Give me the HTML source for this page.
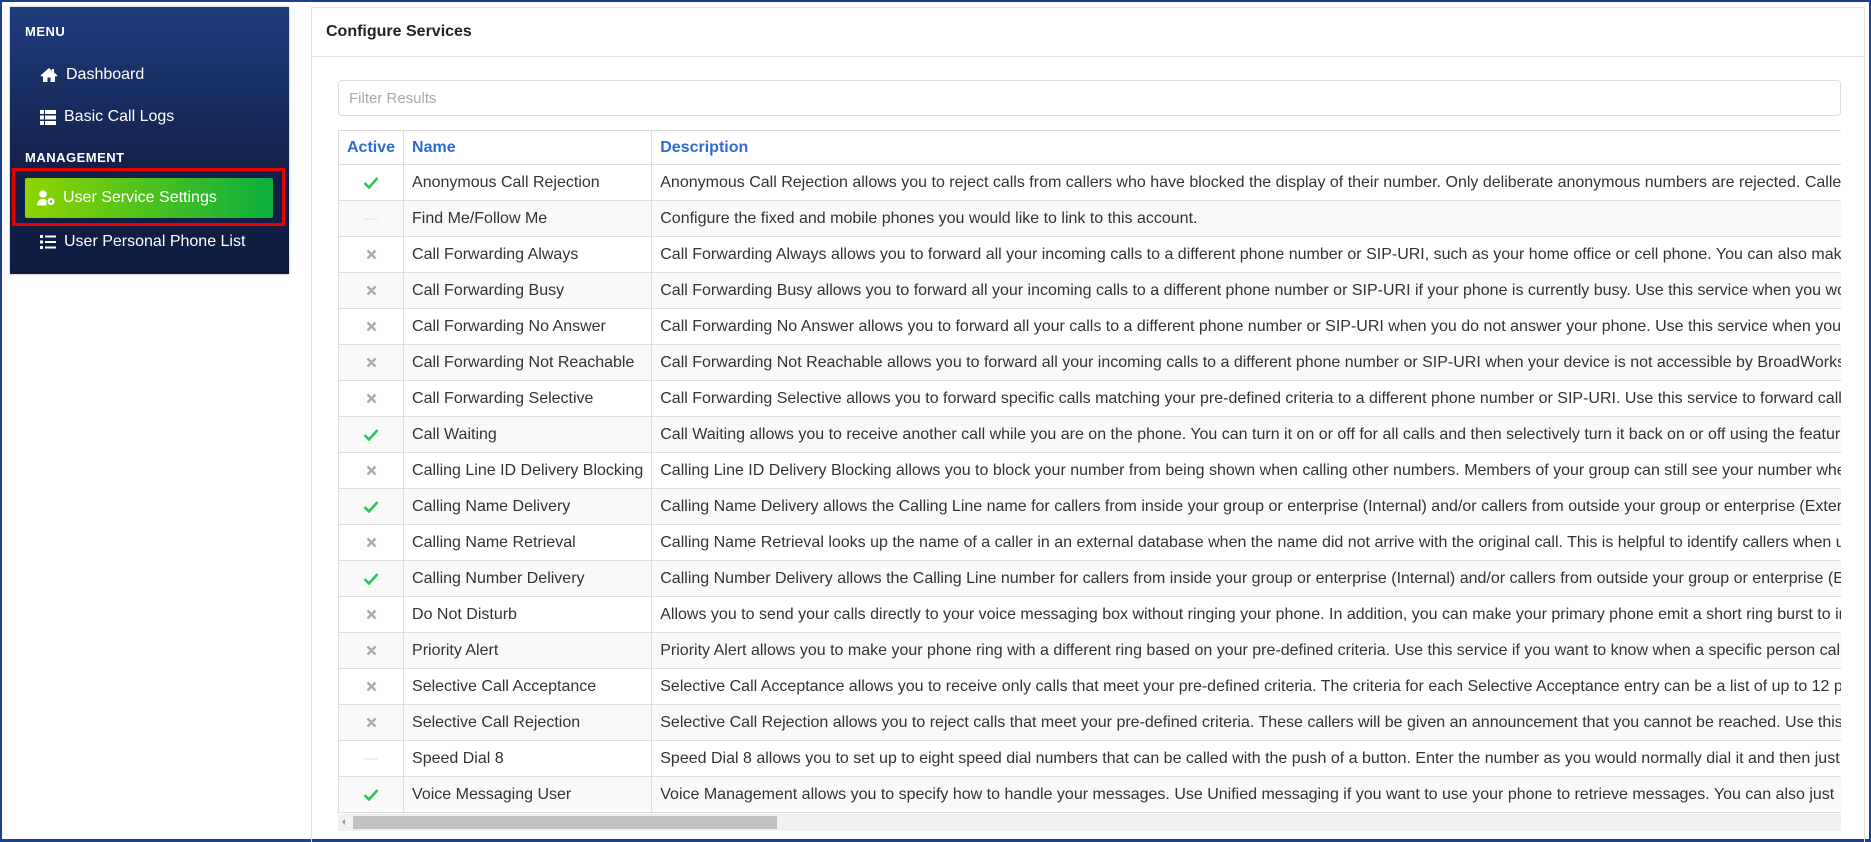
<!DOCTYPE html>
<html><head><meta charset="utf-8"><style>
*{box-sizing:border-box;margin:0;padding:0}
html,body{width:1871px;height:842px;overflow:hidden;background:#fff;font-family:"Liberation Sans",Arial,sans-serif}
.frame{position:absolute;left:0;top:0;width:1871px;height:842px;border:2px solid #1c3f94;border-bottom-width:3px}
.side{position:absolute;left:10px;top:7px;width:279px;height:267px;background:linear-gradient(#1e3d7e,#13214a 60%,#0f1c40);box-shadow:0 0 2px #999}
.lbl{position:absolute;left:15px;color:#fff;font-size:13px;font-weight:bold;letter-spacing:.5px}
.item{position:absolute;left:30px;color:#fff;font-size:16px;display:flex;align-items:center;gap:8px}
.red{position:absolute;left:2px;top:161px;width:273px;height:58px;border:3px solid #e60000}
.btn{position:absolute;left:15px;top:171px;width:248px;height:40px;background:linear-gradient(90deg,#8fd400,#0bae3f);border-radius:2px;color:#fff;font-size:16px;display:flex;align-items:center;padding-left:12px;gap:7px}
.main{position:absolute;left:311px;top:7px;width:1554px;height:835px;border:1px solid #e2e2e2;border-bottom:none}
.hdr{height:49px;border-bottom:1px solid #e5e5e5;font-weight:bold;font-size:16px;color:#222;padding:15px 0 0 14px}
.filter{position:absolute;left:26px;top:72px;width:1503px;height:36px;border:1px solid #ddd;border-radius:4px;color:#aaa;font-size:15px;padding:9px 0 0 10px}
.tw{position:absolute;left:26px;top:122px;width:1503px;height:684px;overflow:hidden}
table{border-collapse:collapse;white-space:nowrap;font-size:16px;color:#333}
td,th{border:1px solid #ddd;height:36px;padding:0 8px;text-align:left}
th{color:#2b6bd6;height:34px;font-weight:bold}
tr:nth-child(odd) td{background:#f9f9f9}
td.a{text-align:center;width:64px;line-height:0}
.na{display:inline-block;width:14px;height:2px;background:#eee;vertical-align:middle}
.sb{position:absolute;left:26px;top:806px;width:1503px;height:17px;background:#f1f1f1}
.th{position:absolute;left:15px;top:2px;width:424px;height:13px;background:#c1c1c1}
.la{position:absolute;left:4px;top:5px;width:0;height:0;border:3px solid transparent;border-right-color:#999;border-left:0}
</style></head><body>
<div class="frame"></div>
<div class="side">
<div class="lbl" style="top:17px">MENU</div>
<div class="item" style="top:59px"><svg width="18" height="16" viewBox="0 0 18 16"><path d="M9 1L0.5 8.5 2 9.8 3 9V15h4.5v-4.5h3V15H15V9l1 .8 1.5-1.3L14 5.4V2h-2v1.7z" fill="#fff"/></svg>Dashboard</div>
<div class="item" style="top:101px"><svg width="16" height="15" viewBox="0 0 16 15"><g fill="#fff"><rect x="0" y="0" width="4" height="4"/><rect x="5" y="0" width="11" height="4"/><rect x="0" y="5.5" width="4" height="4"/><rect x="5" y="5.5" width="11" height="4"/><rect x="0" y="11" width="4" height="4"/><rect x="5" y="11" width="11" height="4"/></g></svg>Basic Call Logs</div>
<div class="lbl" style="top:143px">MANAGEMENT</div>
<div class="red"></div>
<div class="btn"><svg width="19" height="16" viewBox="0 0 19 16"><g fill="#fff"><circle cx="6" cy="4" r="3.8"/><path d="M0 15.5c0-4.5 2.5-6.5 6-6.5 1.5 0 2.5.4 3.3 1L9.5 15.5z"/><circle cx="14" cy="11.5" r="3.6"/></g><circle cx="14" cy="11.5" r="1.3" fill="#5cc418"/></svg>User Service Settings</div>
<div class="item" style="top:226px"><svg width="16" height="14" viewBox="0 0 16 14"><g fill="#fff"><rect x="0" y="0" width="3" height="3"/><rect x="5" y="0.5" width="11" height="2"/><rect x="0" y="5.5" width="3" height="3"/><rect x="5" y="6" width="11" height="2"/><rect x="0" y="11" width="3" height="3"/><rect x="5" y="11.5" width="11" height="2"/></g></svg>User Personal Phone List</div>
</div>
<div class="main">
<div class="hdr">Configure Services</div>
<div class="filter">Filter Results</div>
<div class="tw"><table>
<tr><th style="width:64px">Active</th><th style="width:248px">Name</th><th>Description</th></tr>
<tr><td class="a"><svg width="16" height="13" viewBox="0 0 16 13"><path d="M1.5 7l4.5 4.5L14.5 2" stroke="#2cc55a" stroke-width="2.6" fill="none"/></svg></td><td>Anonymous Call Rejection</td><td>Anonymous Call Rejection allows you to reject calls from callers who have blocked the display of their number. Only deliberate anonymous numbers are rejected. Callers who are unavailable are not rejected.</td></tr>
<tr><td class="a"><span class="na"></span></td><td>Find Me/Follow Me</td><td>Configure the fixed and mobile phones you would like to link to this account.</td></tr>
<tr><td class="a"><svg width="11" height="11" viewBox="0 0 11 11"><path d="M1.5 1.5l8 8M9.5 1.5l-8 8" stroke="#aaa" stroke-width="2.4"/></svg></td><td>Call Forwarding Always</td><td>Call Forwarding Always allows you to forward all your incoming calls to a different phone number or SIP-URI, such as your home office or cell phone. You can also make</td></tr>
<tr><td class="a"><svg width="11" height="11" viewBox="0 0 11 11"><path d="M1.5 1.5l8 8M9.5 1.5l-8 8" stroke="#aaa" stroke-width="2.4"/></svg></td><td>Call Forwarding Busy</td><td>Call Forwarding Busy allows you to forward all your incoming calls to a different phone number or SIP-URI if your phone is currently busy. Use this service when you would</td></tr>
<tr><td class="a"><svg width="11" height="11" viewBox="0 0 11 11"><path d="M1.5 1.5l8 8M9.5 1.5l-8 8" stroke="#aaa" stroke-width="2.4"/></svg></td><td>Call Forwarding No Answer</td><td>Call Forwarding No Answer allows you to forward all your calls to a different phone number or SIP-URI when you do not answer your phone. Use this service when you</td></tr>
<tr><td class="a"><svg width="11" height="11" viewBox="0 0 11 11"><path d="M1.5 1.5l8 8M9.5 1.5l-8 8" stroke="#aaa" stroke-width="2.4"/></svg></td><td>Call Forwarding Not Reachable</td><td>Call Forwarding Not Reachable allows you to forward all your incoming calls to a different phone number or SIP-URI when your device is not accessible by BroadWorks</td></tr>
<tr><td class="a"><svg width="11" height="11" viewBox="0 0 11 11"><path d="M1.5 1.5l8 8M9.5 1.5l-8 8" stroke="#aaa" stroke-width="2.4"/></svg></td><td>Call Forwarding Selective</td><td>Call Forwarding Selective allows you to forward specific calls matching your pre-defined criteria to a different phone number or SIP-URI. Use this service to forward calls</td></tr>
<tr><td class="a"><svg width="16" height="13" viewBox="0 0 16 13"><path d="M1.5 7l4.5 4.5L14.5 2" stroke="#2cc55a" stroke-width="2.6" fill="none"/></svg></td><td>Call Waiting</td><td>Call Waiting allows you to receive another call while you are on the phone. You can turn it on or off for all calls and then selectively turn it back on or off using the feature</td></tr>
<tr><td class="a"><svg width="11" height="11" viewBox="0 0 11 11"><path d="M1.5 1.5l8 8M9.5 1.5l-8 8" stroke="#aaa" stroke-width="2.4"/></svg></td><td>Calling Line ID Delivery Blocking</td><td>Calling Line ID Delivery Blocking allows you to block your number from being shown when calling other numbers. Members of your group can still see your number when</td></tr>
<tr><td class="a"><svg width="16" height="13" viewBox="0 0 16 13"><path d="M1.5 7l4.5 4.5L14.5 2" stroke="#2cc55a" stroke-width="2.6" fill="none"/></svg></td><td>Calling Name Delivery</td><td>Calling Name Delivery allows the Calling Line name for callers from inside your group or enterprise (Internal) and/or callers from outside your group or enterprise (External)</td></tr>
<tr><td class="a"><svg width="11" height="11" viewBox="0 0 11 11"><path d="M1.5 1.5l8 8M9.5 1.5l-8 8" stroke="#aaa" stroke-width="2.4"/></svg></td><td>Calling Name Retrieval</td><td>Calling Name Retrieval looks up the name of a caller in an external database when the name did not arrive with the original call. This is helpful to identify callers when u</td></tr>
<tr><td class="a"><svg width="16" height="13" viewBox="0 0 16 13"><path d="M1.5 7l4.5 4.5L14.5 2" stroke="#2cc55a" stroke-width="2.6" fill="none"/></svg></td><td>Calling Number Delivery</td><td>Calling Number Delivery allows the Calling Line number for callers from inside your group or enterprise (Internal) and/or callers from outside your group or enterprise (External)</td></tr>
<tr><td class="a"><svg width="11" height="11" viewBox="0 0 11 11"><path d="M1.5 1.5l8 8M9.5 1.5l-8 8" stroke="#aaa" stroke-width="2.4"/></svg></td><td>Do Not Disturb</td><td>Allows you to send your calls directly to your voice messaging box without ringing your phone. In addition, you can make your primary phone emit a short ring burst to inform</td></tr>
<tr><td class="a"><svg width="11" height="11" viewBox="0 0 11 11"><path d="M1.5 1.5l8 8M9.5 1.5l-8 8" stroke="#aaa" stroke-width="2.4"/></svg></td><td>Priority Alert</td><td>Priority Alert allows you to make your phone ring with a different ring based on your pre-defined criteria. Use this service if you want to know when a specific person calls</td></tr>
<tr><td class="a"><svg width="11" height="11" viewBox="0 0 11 11"><path d="M1.5 1.5l8 8M9.5 1.5l-8 8" stroke="#aaa" stroke-width="2.4"/></svg></td><td>Selective Call Acceptance</td><td>Selective Call Acceptance allows you to receive only calls that meet your pre-defined criteria. The criteria for each Selective Acceptance entry can be a list of up to 12 phone</td></tr>
<tr><td class="a"><svg width="11" height="11" viewBox="0 0 11 11"><path d="M1.5 1.5l8 8M9.5 1.5l-8 8" stroke="#aaa" stroke-width="2.4"/></svg></td><td>Selective Call Rejection</td><td>Selective Call Rejection allows you to reject calls that meet your pre-defined criteria. These callers will be given an announcement that you cannot be reached. Use this</td></tr>
<tr><td class="a"><span class="na"></span></td><td>Speed Dial 8</td><td>Speed Dial 8 allows you to set up to eight speed dial numbers that can be called with the push of a button. Enter the number as you would normally dial it and then just</td></tr>
<tr><td class="a"><svg width="16" height="13" viewBox="0 0 16 13"><path d="M1.5 7l4.5 4.5L14.5 2" stroke="#2cc55a" stroke-width="2.6" fill="none"/></svg></td><td>Voice Messaging User</td><td>Voice Management allows you to specify how to handle your messages. Use Unified messaging if you want to use your phone to retrieve messages. You can also just</td></tr>
</table></div>
<div class="sb"><div class="la"></div><div class="th"></div></div>
</div>
</body></html>
